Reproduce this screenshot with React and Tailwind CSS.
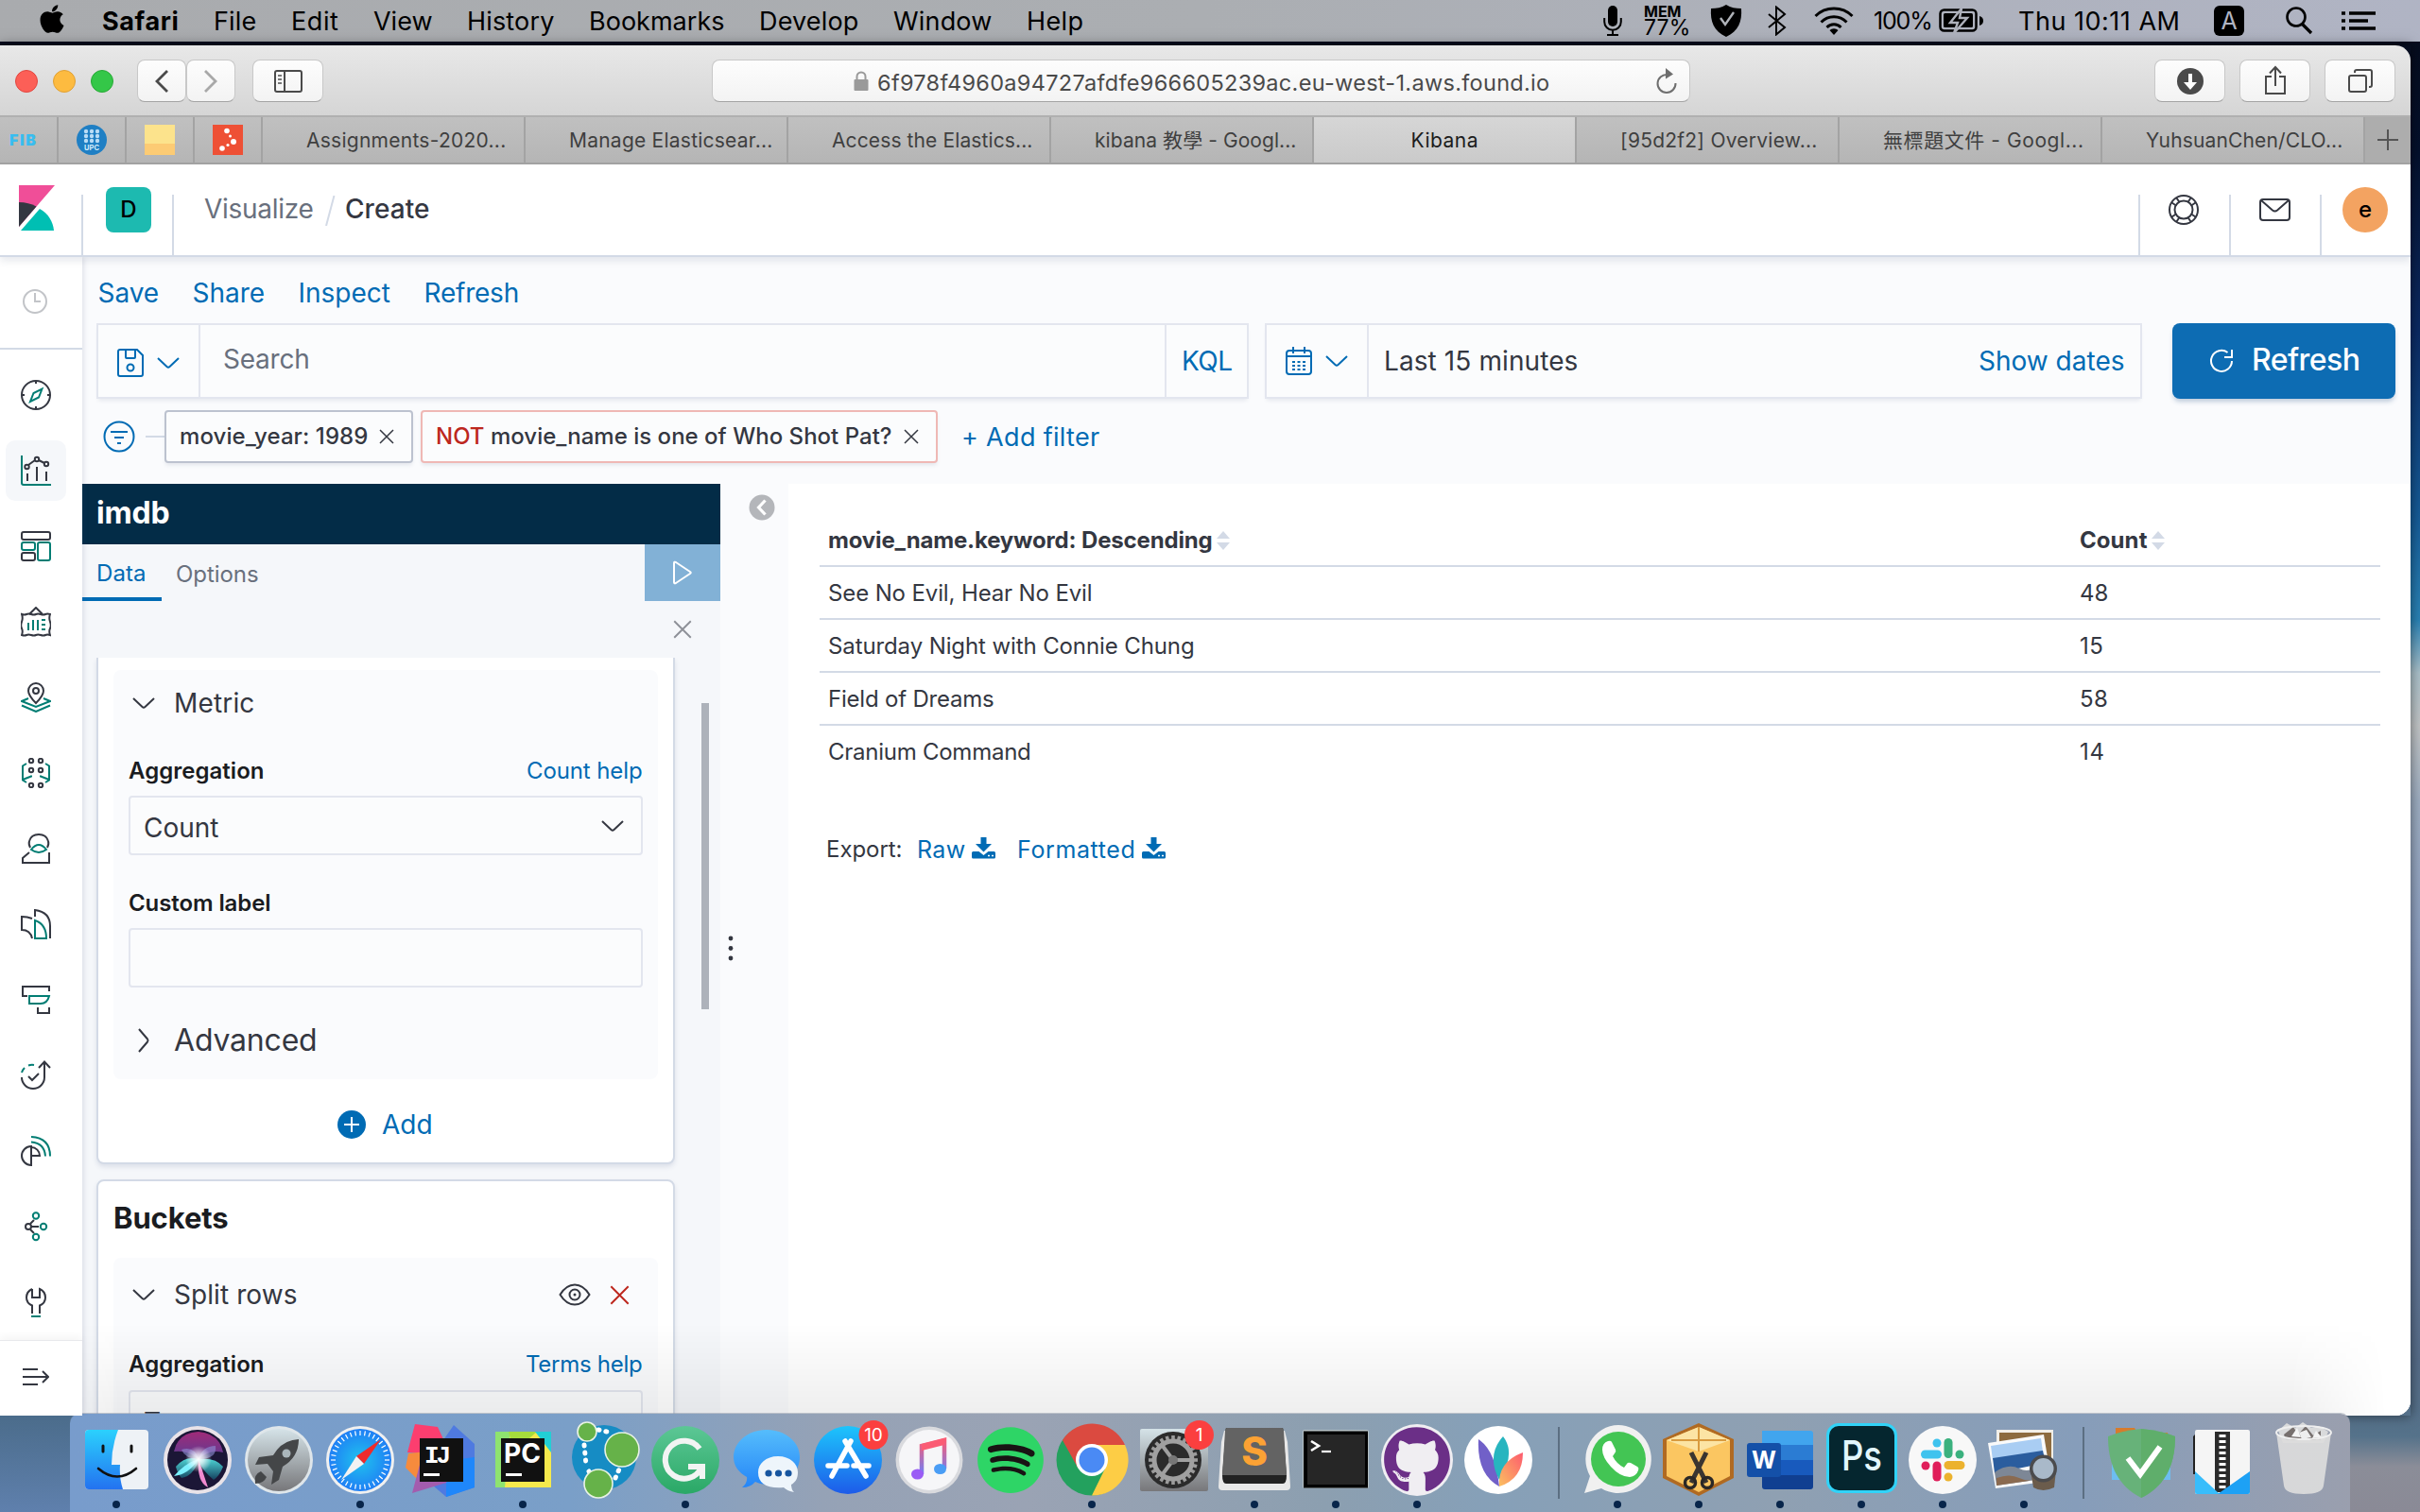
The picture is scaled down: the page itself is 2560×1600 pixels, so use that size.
import React, { useLayoutEffect, useRef } from "react";
import { FaApple, FaGithub, FaPhoneAlt, FaSpotify } from "react-icons/fa";

/* A run of text spaced out to fill a given width. */
function T({ w, className = "", children }) {
  const ref = useRef(null);
  useLayoutEffect(() => {
    const el = ref.current;
    el.style.letterSpacing = "0px";
    const natural = el.getBoundingClientRect().width;
    const count = el.textContent.length;
    el.style.letterSpacing = `${(w + 1.5 - natural) / count}px`;
  }, [w]);
  return (
    <span className={`block shrink-0 pl-px leading-none whitespace-nowrap ${className}`} style={{ width: w + 3 }}>
      <span ref={ref} className="inline-block whitespace-nowrap">{children}</span>
    </span>
  );
}

const Svg = ({ w, h, className = "", children }) => (
  <svg width={w} height={h} viewBox={`0 0 ${w} ${h}`} fill="none" className={`block shrink-0 ${className}`}>{children}</svg>
);

/* ---------- macOS menu bar ---------- */

function MenuBar() {
  const items = [["File", 44], ["Edit", 49], ["View", 61], ["History", 91], ["Bookmarks", 142], ["Develop", 104], ["Window", 103], ["Help", 59]];
  return (
    <div className="flex h-11 items-center bg-linear-to-r from-[#a9abae] via-[#abaeb2] to-[#b0b4c4] text-[27px] text-black">
      <FaApple className="mb-1 ml-[39px] h-[34px] w-[32px] shrink-0" />
      <div className="ml-[36px] flex gap-[35px]">
        <T w={80} className="font-bold">Safari</T>
        {items.map(([t, w]) => <T key={t} w={w}>{t}</T>)}
      </div>
      <Svg w={20} h={32} className="ml-[549px]">
        <rect x="5" y="0" width="10" height="22" rx="5" fill="#000" />
        <path d="M1.200 13v4a8.800 8.800 0 0 0 17.600 0v-4M10 26v5M4 31h12" stroke="#000" strokeWidth="2" />
      </Svg>
      <div className="ml-[22px] flex h-11 w-[54px] flex-col pt-[4px]">
        <T w={38} className="text-[16px] font-bold">MEM</T>
        <T w={48} className="-mt-[2px] text-[23px]">77%</T>
      </div>
      <Svg w={34} h={34} className="ml-[17px]">
        <path d="M17 0c5 3 10 4 16 4 1 14-3 24-16 30C4 28 0 18 1 4 7 4 12 3 17 0z" fill="#000" />
        <path d="M11 14l5 7 9-13" stroke="#b0b3b9" strokeWidth="2.400" />
      </Svg>
      <Svg w={22} h={32} className="ml-[26px]">
        <path d="M2 9l17 14-9 7.500V1.500L19 9 2 23" stroke="#000" strokeWidth="2" />
      </Svg>
      <Svg w={42} h={30} className="ml-[28px]">
        <path d="M1.500 10a28 28 0 0 1 39 0M7.500 16.500a19 19 0 0 1 27 0M13.500 22a10.500 10.500 0 0 1 15 0" stroke="#000" strokeWidth="3" />
        <path d="M16.500 25a6.500 6.500 0 0 1 9 0l-4.500 5z" fill="#000" />
      </Svg>
      <T w={60} className="ml-[20px] text-[25px]">100%</T>
      <Svg w={48} h={26} className="ml-[7px]">
        <rect x="1.500" y="1.500" width="38" height="22" rx="4" stroke="#000" strokeWidth="2.500" />
        <rect x="5" y="5" width="31" height="15" rx="1.500" fill="#000" />
        <path d="M24 0L12 15h8l-4 11L30 10h-8z" fill="#000" stroke="#aeb1bb" strokeWidth="2.400" />
        <path d="M43 8q4 1 4 5t-4 5z" fill="#000" />
      </Svg>
      <T w={170} className="ml-[35px]">Thu 10:11 AM</T>
      <span className="ml-[35px] flex h-8 w-8 items-center justify-center rounded-md bg-black text-[25px] leading-none text-[#b0b4c2]">A</span>
      <Svg w={30} h={30} className="ml-[43px]">
        <circle cx="12" cy="11" r="9.500" stroke="#000" strokeWidth="2.600" />
        <path d="M18.500 18.500l9.500 9.500" stroke="#000" strokeWidth="3.200" />
      </Svg>
      <Svg w={36} h={20} className="ml-[30px]">
        <path d="M0 2h4M8 2h28M0 10h4M8 10h20M0 18h4M8 18h28" stroke="#000" strokeWidth="3.600" />
      </Svg>
    </div>
  );
}

/* ---------- Safari chrome ---------- */

const chip = "flex h-[45px] shrink-0 items-center justify-center rounded-[8px] border border-[#c8c8c8] border-b-[#a4a4a4] bg-linear-to-b from-[#fdfdfd] to-[#f3f3f3]";

function Toolbar() {
  return (
    <div className="flex h-[76px] items-start rounded-tr-[16px] border-b-2 border-[#b0b0b0] bg-linear-to-b from-[#e8e8e8] to-[#d5d5d5] pt-[15px]">
      <div className="ml-4 flex h-[45px] items-center gap-4">
        <span className="h-6 w-6 rounded-full border border-[#e2463f] bg-[#fc5f57]" />
        <span className="h-6 w-6 rounded-full border border-[#e0a033] bg-[#fdbb40]" />
        <span className="h-6 w-6 rounded-full border border-[#27a935] bg-[#34c748]" />
      </div>
      <div className={`${chip} ml-[25px] w-[52px]`}>
        <Svg w={18} h={26}><path d="M15 2L4 13l11 11" stroke="#4a4a4a" strokeWidth="2.800" /></Svg>
      </div>
      <div className={`${chip} w-[52px]`}>
        <Svg w={18} h={26}><path d="M3 2l11 11L3 24" stroke="#a8a8a8" strokeWidth="2.800" /></Svg>
      </div>
      <div className={`${chip} ml-[18px] w-[75px]`}>
        <Svg w={30} h={24}>
          <rect x="1" y="1" width="28" height="22" rx="2" stroke="#4a4a4a" strokeWidth="2" />
          <path d="M11 1v22" stroke="#4a4a4a" strokeWidth="2" />
          <path d="M4 6h4M4 10h4M4 14h4" stroke="#777" strokeWidth="2" />
        </Svg>
      </div>
      <div className={`${chip} ml-[411px] w-[1035px] justify-start`}>
        <Svg w={16} h={22} className="ml-[149px]">
          <rect x="0.500" y="9" width="15" height="12" rx="1" fill="#9a9a9a" />
          <path d="M3.500 10V6a4.500 4.500 0 0 1 9 0v4" stroke="#9a9a9a" strokeWidth="2" />
        </Svg>
        <T w={710} className="mt-1 ml-[8px] text-[23.500px] text-[#4a4a4a]">6f978f4960a94727afdfe966605239ac.eu-west-1.aws.found.io</T>
        <Svg w={24} h={28} className="ml-[111px]">
          <path d="M13 7a9.500 9.500 0 1 0 8.500 9" stroke="#6e6e6e" strokeWidth="2" />
          <path d="M11 0l8 6.500-8 5z" fill="#6e6e6e" />
        </Svg>
      </div>
      <div className={`${chip} ml-[491px] w-[75px]`}>
        <Svg w={28} h={28}>
          <circle cx="14" cy="14" r="14" fill="#4a4a4a" />
          <path d="M12 6h4v9h5l-7 8-7-8h5z" fill="#fff" />
        </Svg>
      </div>
      <div className={`${chip} ml-[15px] w-[75px]`}>
        <Svg w={24} h={32} className="mb-0.5">
          <path d="M8 12H2v18h20V12h-6M12 22V3M6 8.500L12 2l6 6.500" stroke="#4a4a4a" strokeWidth="2" />
        </Svg>
      </div>
      <div className={`${chip} ml-[15px] w-[75px]`}>
        <Svg w={26} h={26}>
          <rect x="1" y="7" width="18" height="17" rx="2" stroke="#4a4a4a" strokeWidth="2" />
          <path d="M7 4V3a2 2 0 0 1 2-2h14a2 2 0 0 1 2 2v14a2 2 0 0 1-2 2h-1" stroke="#4a4a4a" strokeWidth="2" />
        </Svg>
      </div>
    </div>
  );
}

function TabBar() {
  const tabs = [["Assignments-2020...", 210], ["Manage Elasticsear...", 214], ["Access the Elastics...", 211], ["kibana 教學 - Googl...", 212], ["Kibana", 70], ["[95d2f2] Overview...", 207], ["無標題文件 - Googl...", 211], ["YuhsuanChen/CLO...", 207]];
  const pin = "flex shrink-0 items-center justify-center border-r-2 border-[#a3a3a3]";
  return (
    <div className="flex h-[50px] border-b-2 border-[#a2a2a2] bg-linear-to-b from-[#c0c0c0] to-[#b5b5b5] text-[21px]">
      <div className={`${pin} w-[62px] justify-start pl-[9px]`}><T w={28} className="text-[16px] font-black text-[#38bdf0]">FIB</T></div>
      <div className={`${pin} w-[72px]`}>
        <Svg w={32} h={32}>
          <circle cx="16" cy="16" r="16" fill="#1f7fc4" />
          {[7, 12, 17].map((y) => [10, 16, 22].map((x) => <circle key={`${x}-${y}`} cx={x} cy={y} r="2.200" fill="#b9dcf5" />))}
          <text x="16" y="27" fontSize="7.500" fontWeight="700" textAnchor="middle" fill="#d6ecfa">UPC</text>
        </Svg>
      </div>
      <div className={`${pin} w-[72px]`}>
        <Svg w={32} h={32}><rect width="32" height="32" fill="#fce38c" /><rect y="20" width="32" height="12" fill="#fccb74" /></Svg>
      </div>
      <div className={`${pin} w-[72px]`}>
        <Svg w={32} h={32}>
          <rect width="32" height="32" fill="#ee5035" />
          <g fill="#fff"><circle cx="15" cy="6.500" r="2.800" /><circle cx="18.500" cy="12" r="1.500" /><circle cx="22" cy="18" r="3" /><circle cx="16" cy="21.500" r="1.600" /><circle cx="10" cy="25" r="2.800" /></g>
        </Svg>
      </div>
      {tabs.map(([t, w]) => {
        const active = t === "Kibana";
        return (
          <div key={t} className={active
            ? "flex w-[278px] shrink-0 items-center justify-center border-r-2 border-[#a3a3a3] bg-linear-to-b from-[#d6d6d6] to-[#cacaca] text-[#1c1c1c]"
            : "flex w-[278px] shrink-0 items-center border-r-2 border-[#a3a3a3] pl-[45px] text-[#3f3f3f]"}>
            <T w={w}>{t}</T>
          </div>
        );
      })}
      <div className="flex flex-1 items-center justify-center bg-[#adadad]">
        <Svg w={22} h={22}><path d="M11 0v22M0 11h22" stroke="#555" strokeWidth="2" /></Svg>
      </div>
    </div>
  );
}

/* ---------- Kibana icons ---------- */

const D = "#343741";
const G = "#017d73";

const navIcons = [
  ["discover", <>
    <circle cx="16" cy="16" r="15" stroke={D} /><path d="M16 1v3M16 28v3M1 16h3M28 16h3" stroke={D} />
    <path d="M22.500 9.500l-3.500 9-9 4.500 3.500-9z" stroke={G} /></>],
  ["visualize", <>
    <path d="M1 0v29a2 2 0 0 0 2 2h29" stroke={G} /><path d="M7 19v8M17 12v15M27 17v10M8 10l7-5M19 5l6 3" stroke={D} />
    <circle cx="6.500" cy="12" r="2.200" stroke={D} /><circle cx="17" cy="4" r="2.200" stroke={D} /><circle cx="27" cy="9" r="2.200" stroke={D} /></>],
  ["dashboard", <>
    <rect x="1" y="1" width="30" height="8" rx="2" stroke={D} /><rect x="1" y="12" width="14" height="8" rx="2" stroke={G} />
    <rect x="18" y="12" width="13" height="19" rx="2" stroke={G} /><rect x="1" y="23" width="14" height="8" rx="2" stroke={D} /></>],
  ["canvas", <>
    <path d="M9 8l7-7 7 7" stroke={D} /><path d="M1 8q3 1 5 0t5 0 5 0 5 0 5 0 5 0q-1.500 4 0 8t0 7 0 7q-3-1-5 0t-5 0-5 0-5 0-5 0-5 0q1.500-4 0-7t0-7 0-8z" stroke={D} />
    <path d="M8 17v8M13 14v11M18 14v11M22 14h4M22 19h4M22 24h4" stroke={G} /></>],
  ["maps", <>
    <path d="M16 22C11 17 8 13 8 9a8 8 0 0 1 16 0c0 4-3 8-8 13z" stroke={D} /><circle cx="16" cy="9" r="3" stroke={D} />
    <path d="M8 17l-7 3 15 6 15-6-7-3M1 24.500l15 6.500 15-6.500" stroke={G} /></>],
  ["ml", <>
    {[3, 13, 29].map((y) => [11, 21].map((x) => <circle key={`${x}-${y}`} cx={x} cy={y} r="2.200" stroke={D} />))}
    <path d="M6 6L2 8.500v15L6 26M2 23l9-3.500v-1M26 6l4 2.500v15L26 26M30 23l-9-3.500v-1" stroke={G} /></>],
  ["infra", <>
    <path d="M10 15q-2-4-1-7 2-7 10-7t10 7q1 3-1 7M9 20l-7 6v5h28V20" stroke={D} /><path d="M11 17q8-10 16 0-8 6-16 0z" stroke={G} /></>],
  ["logs", <>
    <path d="M12 10Q7 8 1 8v14q9 0 11 9M15 8V1q16 2 16 17v13" stroke={D} /><path d="M15 12q12 4 12 19H15z" stroke={G} /></>],
  ["apm", <>
    <path d="M7 12H2V2h28v5M18 24v6h12v-6" stroke={D} /><path d="M9 12h21q-2 8-9 8H9z" stroke={G} /></>],
  ["uptime", <>
    <path d="M1 18a12 12 0 0 0 24 0V2M19 8l6-6.500L31 8M8 17l4 4 7-7" stroke={D} /><path d="M1 13a12 12 0 0 1 3-5M8 5.500a12 12 0 0 1 6-.5" stroke={G} /></>],
  ["siem", <>
    <path d="M11 11a10 10 0 1 0 0 20zM11 12a9 9 0 0 1 9 9h-9" stroke={D} /><path d="M11 6.500q14 1 15 15M11 1q20 1 20 20.500" stroke={G} /></>],
  ["graph", <>
    <circle cx="8" cy="16" r="3" stroke={D} /><path d="M11 16h8M10 13l4-4M10 19l4 4" stroke={D} />
    <circle cx="16" cy="4.500" r="3.200" stroke={G} /><circle cx="24" cy="16" r="3.200" stroke={G} /><circle cx="16" cy="27" r="3.200" stroke={G} /></>],
  ["tools", <>
    <path d="M12 2a10 10 0 0 0-6 9c0 4 2.500 7 6 8.500V28M20 28v-8.500c3.500-1.500 6-4.500 6-8.500a10 10 0 0 0-6-9v9h-8V2" stroke={D} /><path d="M11 31h10" stroke={G} /></>],
];

function Sidebar() {
  return (
    <div className="z-10 flex w-[87px] shrink-0 flex-col bg-white shadow-[2px_0_5px_rgba(60,70,110,0.13)]">
      <div className="flex h-[98px] items-center border-b-2 border-[#d3dae6] pb-0.5 pl-6">
        <Svg w={26} h={26}><circle cx="13" cy="13" r="12" stroke="#c2c4c8" strokeWidth="2" /><path d="M13 4v9h6" stroke="#c2c4c8" strokeWidth="2" /></Svg>
      </div>
      <div className="pt-2">
        {navIcons.map(([name, art]) => (
          <div key={name} className="flex h-20 items-center pl-1.5">
            <div className={name === "visualize" ? "flex h-16 w-16 items-center justify-center rounded-[10px] bg-[#f5f7fa]" : "flex h-16 w-16 items-center justify-center"}>
              <Svg w={32} h={32}><g strokeWidth="2">{art}</g></Svg>
            </div>
          </div>
        ))}
      </div>
      <div className="flex flex-1 items-center border-t border-[#e8e9ec] pb-1 pl-6 shadow-[0_-4px_8px_rgba(0,0,0,0.04)]">
        <Svg w={28} h={20}><path d="M0 2h16M0 10h27M0 18h16M21 4l6 6-6 6" stroke={D} strokeWidth="2" /></Svg>
      </div>
    </div>
  );
}

function Header() {
  const cell = "mt-8 flex h-16 shrink-0 border-l-2 border-[#d3dae6]";
  return (
    <div className="z-20 flex h-[98px] shrink-0 border-b-2 border-[#d3dae6] bg-white shadow-[0_4px_8px_rgba(60,70,110,0.12)]">
      <div className="w-[86px] pt-[22px] pl-5">
        <Svg w={38} h={48}>
          <path d="M0 0h38L0 44z" fill="#f04e98" />
          <path d="M0 18c7 0 13 1.500 18.500 4.500L0 44z" fill="#343741" />
          <path d="M22 25C31 30 36 38 37 48H2z" fill="#00bfb3" />
        </Svg>
      </div>
      <div className={`${cell} w-[96px]`}>
        <span className="-mt-2 ml-6 flex h-12 w-12 items-center justify-center rounded-[8px] bg-[#1dbab0] text-[24px] font-medium text-black">D</span>
      </div>
      <div className={`${cell} flex-1 text-[28px]`}>
        <div className="-mt-[13px] flex h-[56px] items-center pl-[31px]">
          <T w={114} className="text-[#69707d]">Visualize</T>
          <Svg w={12} h={32} className="mt-1 ml-[11px]"><path d="M10.500 0L2 32" stroke="#d3dae6" strokeWidth="2" /></Svg>
          <T w={88} className="ml-[9px] font-medium text-[#343741]">Create</T>
        </div>
      </div>
      <div className={`${cell} w-[96px] pl-[29px]`}>
        <Svg w={34} h={34}>
          <circle cx="17" cy="16" r="15" stroke={D} strokeWidth="2" /><circle cx="17" cy="16" r="9.500" stroke={D} strokeWidth="2" />
          <path d="M9.500 3.500l3 4.500M24.500 3.500l-3 4.500M9.500 28.500l3-4.500M24.500 28.500l-3-4.500M4.500 8.500l4.500 3M29.500 8.500l-4.500 3M4.500 23.500l4.500-3M29.500 23.500l-4.500-3" stroke={D} strokeWidth="2" />
        </Svg>
      </div>
      <div className={`${cell} w-[96px] pt-1 pl-[30px]`}>
        <Svg w={34} h={26}><rect x="1" y="1" width="31" height="22" rx="3" stroke={D} strokeWidth="2" /><path d="M2 2l12 10.500q2.500 2 5 0L31 2" stroke={D} strokeWidth="2" /></Svg>
      </div>
      <div className={`${cell} w-[96px]`}>
        <span className="-mt-2 ml-[22px] flex h-12 w-12 items-center justify-center rounded-full bg-[#f3a361] text-[24px] font-medium text-black">e</span>
      </div>
    </div>
  );
}

const Chevron = ({ color = D, className = "" }) => (
  <Svg w={24} h={14} className={className}><path d="M1 2l9.500 9q1.500 1.200 3 0L23 2" stroke={color} strokeWidth="2" /></Svg>
);
const Cross = ({ s = 16, color = D, className = "" }) => (
  <svg width={s} height={s} viewBox="0 0 16 16" className={`block shrink-0 ${className}`}><path d="M1 1l14 14M15 1L1 15" stroke={color} strokeWidth="1.500" /></svg>
);

const BLUE = "#006bb4";

function QueryBar() {
  const box = "flex shrink-0 border-2 border-[#e3e6ef] bg-[#fbfcfd] shadow-[0_4px_4px_-2px_rgba(60,70,110,0.1)]";
  return (
    <div className="flex h-20 pl-[15px] text-[28px]">
      <div className={`${box} w-[1219px]`}>
        <div className="flex w-[108px] items-center border-r-2 border-[#e3e6ef] pl-5">
          <Svg w={28} h={30} className="mt-1">
            <path d="M3 1h18l6 6v20a2 2 0 0 1-2 2H3a2 2 0 0 1-2-2V3a2 2 0 0 1 2-2zM9 1v8a1 1 0 0 0 1 1h8a1 1 0 0 0 1-1V1" stroke={BLUE} strokeWidth="2" />
            <circle cx="14" cy="20" r="3.500" stroke={BLUE} strokeWidth="2" />
          </Svg>
          <Chevron color={BLUE} className="mt-1 ml-[14px]" />
        </div>
        <div className="flex flex-1 items-center pb-1 pl-[23px]"><T w={90} className="text-[#69707d]">Search</T></div>
        <div className="flex w-[87px] items-center border-l-2 border-[#e3e6ef] pl-[15px]"><T w={52} className="text-[#006bb4]">KQL</T></div>
      </div>
      <div className={`${box} ml-[17px] w-[928px]`}>
        <div className="flex w-[108px] items-center border-r-2 border-[#e3e6ef] pl-5">
          <Svg w={28} h={32}>
            <rect x="1" y="5" width="26" height="25" rx="3" stroke={BLUE} strokeWidth="2" />
            <path d="M1 11h26M8 1v7M20 1v7" stroke={BLUE} strokeWidth="2" />
            <path d="M7 17h3M12.500 17h3M18 17h3M7 21h3M12.500 21h3M18 21h3M7 25h3M12.500 25h3M18 25h3" stroke={BLUE} strokeWidth="2.200" />
          </Svg>
          <Chevron color={BLUE} className="ml-[14px]" />
        </div>
        <div className="flex flex-1 items-center pl-[15px]"><T w={204} className="text-[#343741]">Last 15 minutes</T></div>
        <T w={153} className="mr-[16px] self-center text-[#006bb4]">Show dates</T>
      </div>
      <div className="ml-8 flex w-[236px] shrink-0 items-center rounded-[8px] bg-[#0d6cb3] text-[32px] text-white shadow-[0_4px_5px_-1px_rgba(50,90,140,0.3)]">
        <Svg w={28} h={28} className="ml-[38px]"><path d="M25 14a11 11 0 1 1-4.500-9M25 2v8h-8" stroke="#fff" strokeWidth="2" /></Svg>
        <T w={113} className="mb-0.5 ml-[17px] font-medium">Refresh</T>
      </div>
    </div>
  );
}

function FilterBar() {
  return (
    <div className="mt-3 flex h-14 items-center pl-[22px] text-[24px] font-medium text-[#343741]">
      <Svg w={34} h={34}><circle cx="17" cy="17" r="15.500" stroke={BLUE} strokeWidth="2" /><path d="M8 12h18M12 18h10M15 24h4" stroke={BLUE} strokeWidth="2.200" /></Svg>
      <span className="ml-[11px] h-[2px] w-5 bg-[#d3dae6]" />
      <div className="flex h-14 w-[263px] shrink-0 items-center rounded-[4px] border-2 border-[#bcc2cf] bg-[#fbfcfd] pl-[13px] shadow-[0_3px_4px_-1px_rgba(60,70,110,0.12)]">
        <T w={198}>movie_year: 1989</T><Cross className="ml-[11px]" />
      </div>
      <div className="ml-2 flex h-14 w-[547px] shrink-0 items-center rounded-[4px] border-2 border-[#efb8b5] bg-[#fbfcfd] pl-[13px] shadow-[0_3px_4px_-1px_rgba(60,70,110,0.12)]">
        <T w={481}><span className="text-[#bd271e]">NOT</span> movie_name is one of Who Shot Pat?</T><Cross className="ml-[12px]" />
      </div>
      <T w={145} className="ml-[24px] text-[27px] font-normal text-[#006bb4]">+ Add filter</T>
    </div>
  );
}

function Field({ label, lw, help, hw }) {
  return (
    <div className="flex items-center justify-between pr-[16px] pl-[15px] text-[24px]">
      <T w={lw} className="font-semibold text-[#1a1c21]">{label}</T>
      {help && <T w={hw} className="text-[#006bb4]">{help}</T>}
    </div>
  );
}

function ConfigPanel() {
  const card = "w-[612px] border-2 border-[#d3dae6] bg-white shadow-[0_3px_5px_rgba(60,80,120,0.13)]";
  return (
    <div className="flex w-[675px] shrink-0 flex-col bg-[#f5f7fa] text-[28px] text-[#343741]">
      <div className="flex h-16 shrink-0 items-center bg-[#032c47] pb-0.5 pl-[14px] text-[32px] text-white"><T w={76} className="font-bold">imdb</T></div>
      <div className="flex h-[60px] shrink-0 text-[24px]">
        <div className="flex w-[84px] items-center border-b-4 border-[#006bb4] pt-1.5 pl-[14px]"><T w={51} className="text-[#006bb4]">Data</T></div>
        <div className="flex flex-1 items-center pt-[3px] pl-[14px]"><T w={86} className="text-[#69707d]">Options</T></div>
        <div className="flex w-20 items-center justify-center bg-[#82b1d6]">
          <Svg w={22} h={26}><path d="M2 3v20q0 2 2 1l15-10q1.500-1 0-2L4 2Q2 1 2 3z" stroke="#fff" strokeWidth="2" /></Svg>
        </div>
      </div>
      <div className="flex h-[60px] shrink-0 items-center justify-end pr-[30px]"><Cross s={20} color="#8d9097" /></div>
      <div className="flex flex-1 overflow-hidden">
        <div className="ml-[15px] w-[612px]">
          <div className={`${card} h-[536px] rounded-b-[8px] border-t-0 pt-[13px]`}>
            <div className="mx-4 h-[433px] rounded-[8px] bg-[#fafbfd]">
              <div className="flex h-[70px] items-center pl-[20px]"><Chevron /><T w={84} className="ml-[19px]">Metric</T></div>
              <div className="h-[63px] pt-[25px]"><Field label="Aggregation" lw={142} help="Count help" hw={121} /></div>
              <div className="mx-4 flex h-[63px] items-center justify-between rounded-[4px] border-2 border-[#e3e6ef] bg-[#fbfcfd] pr-[18px] pl-[13px]">
                <T w={78} className="mt-1">Count</T><Chevron />
              </div>
              <div className="h-[77px] pt-[39px]"><Field label="Custom label" lw={149} /></div>
              <div className="mx-4 h-[63px] rounded-[4px] border-2 border-[#e3e6ef] bg-[#fbfcfd]" />
              <div className="mt-[40px] flex items-center pl-[25px] text-[32px]">
                <Svg w={14} h={26}><path d="M2 1l9 10.500q1.200 1.500 0 3L2 25" stroke={D} strokeWidth="2" /></Svg>
                <T w={150} className="ml-[24px]">Advanced</T>
              </div>
            </div>
            <div className="mt-[33px] flex items-center pl-[253px]">
              <Svg w={30} h={30}><circle cx="15" cy="15" r="15" fill={BLUE} /><path d="M15 7v16M7 15h16" stroke="#fff" strokeWidth="2" /></Svg>
              <T w={52} className="ml-[16px] text-[#006bb4]">Add</T>
            </div>
          </div>
          <div className={`${card} mt-[16px] h-[500px] rounded-[8px] pt-[23px]`}>
            <T w={120} className="ml-[15px] text-[31px] font-bold text-[#1a1c21]">Buckets</T>
            <div className="mx-4 mt-[27px] h-[440px] rounded-[8px] bg-[#fafbfd]">
              <div className="flex h-[78px] items-center pl-[20px]">
                <Chevron /><T w={129} className="ml-[19px]">Split rows</T>
                <Svg w={34} h={26} className="ml-[276px]">
                  <path d="M1.500 13Q8 2.500 17 2.500T32.500 13Q26 23.500 17 23.500T1.500 13z" stroke={D} strokeWidth="2" />
                  <circle cx="17" cy="13" r="5.500" stroke={D} strokeWidth="2" /><circle cx="17" cy="13" r="1.500" fill={D} />
                </Svg>
                <Cross s={21} color="#bd271e" className="ml-[20px]" />
              </div>
              <div className="h-[62px] pt-[23px]"><Field label="Aggregation" lw={142} help="Terms help" hw={122} /></div>
              <div className="mx-4 h-[63px] rounded-[4px] border-2 border-[#e3e6ef] bg-[#fbfcfd] pt-[18px] pl-[13px]"><T w={76}>Terms</T></div>
            </div>
          </div>
        </div>
        <div className="mt-[48px] ml-[28px] h-[324px] w-2 bg-[#adb2ba]" />
      </div>
    </div>
  );
}

const Sort = () => (
  <Svg w={14} h={20} className="ml-[4px]"><path d="M0 8l7-8 7 8zM0 12h14l-7 8z" fill="#d3dae6" /></Svg>
);
const Download = () => (
  <Svg w={25} h={24} className="mb-[2px]">
    <path d="M9.500 0h6v7H21L12.500 15.500 4 7h5.500z" fill={BLUE} />
    <path d="M1.500 15H7.500l5 4 5-4h6a1.500 1.500 0 0 1 1.500 1.500v4.500a1.500 1.500 0 0 1-1.500 1.500h-22A1.500 1.500 0 0 1 0 21v-4.500A1.500 1.500 0 0 1 1.500 15z" fill={BLUE} />
    <path d="M17 19.500h2M21 19.500h2" stroke="#fff" strokeWidth="1.600" />
  </Svg>
);

function Results() {
  const rows = [["See No Evil, Hear No Evil", 278, "48", 29], ["Saturday Night with Connie Chung", 386, "15", 24], ["Field of Dreams", 174, "58", 29], ["Cranium Command", 213, "14", 25]];
  return (
    <div className="flex-1 bg-white pt-8 pr-8 pl-[33px] text-[24px] text-[#343741]">
      <div className="flex h-14 items-center border-b-2 border-[#d3dae6] pt-0.5 pl-[8px] font-bold">
        <div className="flex w-[1324px] items-center"><T w={405}>movie_name.keyword: Descending</T><Sort /></div>
        <T w={70}>Count</T><Sort />
      </div>
      {rows.map(([name, w, n, nw], i) => (
        <div key={name} className={i < 3 ? "flex h-14 items-center border-b-2 border-[#d3dae6] pt-0.5 pl-[8px]" : "flex h-14 items-center pl-[8px]"}>
          <div className="w-[1324px]"><T w={w}>{name}</T></div><T w={nw}>{n}</T>
        </div>
      ))}
      <div className="mt-[62px] flex items-center pl-[6px]">
        <T w={79}>Export:</T>
        <div className="ml-[14px] flex items-center gap-[6px] text-[25px] text-[#006bb4]"><T w={50}>Raw</T><Download /></div>
        <div className="ml-[22px] flex items-center gap-[6px] text-[25px] text-[#006bb4]"><T w={124}>Formatted</T><Download /></div>
      </div>
    </div>
  );
}

function Kibana() {
  return (
    <div className="flex flex-1 flex-col overflow-hidden rounded-br-[16px] bg-white">
      <Header />
      <div className="flex flex-1 overflow-hidden">
        <Sidebar />
        <div className="flex flex-1 flex-col bg-[#fafbfd]">
          <div className="flex h-[70px] items-center gap-[34px] pt-[6px] pl-[15.500px] text-[28px] text-[#006bb4]">
            <T w={63}>Save</T><T w={75}>Share</T><T w={96}>Inspect</T><T w={99}>Refresh</T>
          </div>
          <QueryBar />
          <FilterBar />
          <div className="mt-[22px] flex flex-1 overflow-hidden">
            <ConfigPanel />
            <div className="flex w-[72px] shrink-0 flex-col">
              <Svg w={28} h={28} className="mt-[11px] ml-[30px]"><circle cx="14" cy="14" r="13.500" fill="#b4b6ba" /><path d="M17.500 6.500L10.500 14l7 7.500" stroke="#fff" strokeWidth="3.200" /></Svg>
              <Svg w={6} h={28} className="mt-[439px] ml-2"><g fill={D}><circle cx="3" cy="3" r="2.400" /><circle cx="3" cy="13.500" r="2.400" /><circle cx="3" cy="24" r="2.400" /></g></Svg>
            </div>
            <Results />
          </div>
        </div>
      </div>
    </div>
  );
}

/* ---------- Dock ---------- */

const Badge = ({ x, children }) => (
  <>
    <circle cx={x} cy="22.500" r="15.500" fill="#fb3f3f" />
    <text x={x} y="29" fontSize="19" textAnchor="middle" fill="#fff">{children}</text>
  </>
);

const gear = Array.from({ length: 24 }, (_, i) => i * 15);
const ticks = Array.from({ length: 36 }, (_, i) => i * 10);

const apps = [
  ["finder", true, <>
    <rect x="10" y="17" width="67" height="63" rx="4" fill="#eef2f6" />
    <path d="M14 17h31q-7 18-7 37h9q-1 14 3 26H14a4 4 0 0 1-4-4V21a4 4 0 0 1 4-4z" fill="url(#finder)" />
    <path d="M29 34v6M59 34v6" stroke="#111" strokeWidth="3" strokeLinecap="round" />
    <path d="M24 58q20 17 40 0" stroke="#111" strokeWidth="2.600" strokeLinecap="round" /></>],
  ["siri", false, <>
    <circle cx="43" cy="49" r="36" fill="#e9e3e8" /><circle cx="43" cy="49" r="32" fill="#1b1636" />
    <path d="M18 40q4-20 26-21 22 2 26 22-14-4-26 7-12-10-26-8z" fill="url(#siriTop)" />
    <path d="M20 56q10-12 24-8 18-2 26 8-4 10-10 14-12-10-16-20-6 16-18 18-4-4-6-12z" fill="url(#siriLow)" />
    <path d="M44 48l10 30q-12-6-10-30z" fill="#f08ad0" /><path d="M44 48Q30 52 18 66q16-2 26-18z" fill="#7cf0ff" />
    <path d="M26 38q14-4 18 10-14 0-18-10zM62 34q2 14-18 14 4-14 18-14z" fill="#8f8fd6" opacity="0.600" />
    <circle cx="44" cy="48" r="14" fill="url(#glow)" /></>],
  ["launchpad", false, <>
    <circle cx="43" cy="49" r="36" fill="#dfe6ea" /><circle cx="43" cy="49" r="33" fill="url(#silver)" />
    <path d="M64 27q-18 1-27 17l-15 2-4 8 13-1 6 8-2 14 8-5 4-14q17-10 17-29z" fill="#444648" />
    <circle cx="51" cy="42" r="4.500" fill="#aab6bb" /><path d="M24 61q-8 3-6 13 9 0 12-7z" fill="#444648" /></>],
  ["safari", true, <>
    <circle cx="43" cy="49" r="36" fill="#f0f0f0" /><circle cx="43" cy="49" r="33" fill="url(#safari)" />
    {ticks.map((a) => <path key={a} d="M43 18v5" stroke="#fff" strokeWidth="1.200" transform={`rotate(${a} 43 49)`} />)}
    <path d="M65 27L39 45l8 8z" fill="#ee2b2b" /><path d="M23 70l16-25 8 8z" fill="#f2f2f2" /></>],
  ["intellij", false, <>
    <path d="M15 11l24 3 14 30-46-3z" fill="#fc3e6f" /><path d="M8 42l20-2 4 30-14 0-13-13z" fill="#f68b3d" />
    <path d="M56 12l22 20v46l-30 10-28-24z" fill="#4f7ae0" /><path d="M48 50l30-4v32l-30 10z" fill="#1f87fb" /><path d="M12 84l8-30 32 14-4 5z" fill="#a35cae" />
    <rect x="20" y="26" width="46" height="46" fill="#111" />
    <text x="25" y="52" fontSize="26" fontWeight="700" fontFamily="Liberation Mono, monospace" textLength="28" fill="#fff">IJ</text><rect x="24" y="63" width="17" height="3" fill="#fff" /></>],
  ["pycharm", true, <>
    <rect x="14" y="19" width="59" height="59" fill="#f5e94c" /><path d="M14 19h16l-6 59H14z" fill="#8ee36f" /><path d="M28 19h30L34 40z" fill="#a5dc3c" /><path d="M56 19h17v22z" fill="#22cfd5" />
    <rect x="20" y="26" width="46" height="46" fill="#111" />
    <text x="23" y="52" fontSize="28" fontWeight="700" textLength="39" lengthAdjust="spacingAndGlyphs" fill="#fff">PC</text><rect x="25" y="63" width="17" height="3" fill="#fff" /></>],
  ["neo4j", false, <>
    <circle cx="43" cy="46" r="34" fill="#168cc4" />
    <path d="M37 17l9 2M22 33l2 21M27 61l5 8M55 68l6-14" stroke="#fff" strokeWidth="5" strokeDasharray="1 7" strokeLinecap="round" />
    <g fill="#66b249" stroke="#e9f3e4" strokeWidth="1.600"><circle cx="25" cy="19" r="10" /><circle cx="62" cy="38" r="18" /><circle cx="37" cy="74" r="15" /></g></>],
  ["grammarly", true, <>
    <circle cx="43" cy="49" r="36" fill="url(#green)" />
    <path d="M58 37a20 20 0 1 0 2 20M46 56h15v13" stroke="#f2f4f3" strokeWidth="6" /></>],
  ["messages", false, <>
    <path d="M43 17c20 0 35 13 35 29S64 75 45 75q-8 0-14-3-5 6-14 6 6-5 5-11Q8 59 8 46c0-16 15-29 35-29z" fill="url(#blue)" />
    <path d="M55 45c13 0 21 8 21 17 0 7-3 11-7 13q0 5 3 8-7-1-11-5-27 2-27-16c0-9 8-17 21-17z" fill="#eef5fb" />
    <g fill="#17559f"><circle cx="45" cy="63" r="3.600" /><circle cx="55.500" cy="63" r="3.600" /><circle cx="66" cy="63" r="3.600" /></g></>],
  ["app-store", false, <>
    <circle cx="43" cy="49" r="36" fill="url(#store)" />
    <path d="M46 29L26 66M40 29l22 37M22 55h20M49 55h16" stroke="#fff" strokeWidth="5.500" strokeLinecap="round" />
    <Badge x="70">10</Badge></>],
  ["music", false, <>
    <circle cx="43" cy="49" r="35.500" fill="#d9dade" /><circle cx="43" cy="49" r="32" fill="#f6f6f8" />
    <path d="M35 64V34l24-6v30" stroke="url(#note)" strokeWidth="4.500" /><path d="M35 32l24-6v7l-24 6z" fill="#fb5c74" />
    <ellipse cx="30.500" cy="64" rx="6.500" ry="5.500" fill="#9a5cf5" /><ellipse cx="54.500" cy="58.500" rx="6.500" ry="5.500" fill="#4a9df5" /></>],
  ["spotify", false, <>
    <circle cx="43" cy="49" r="34" fill="#191414" /><FaSpotify x="7" y="13" size="72" color="#2ed566" /></>],
  ["chrome", true, <>
    <circle cx="43" cy="49" r="37.500" fill="#23a15e" />
    <path d="M43 49L12 28a37.500 37.500 0 0 1 66 5z" fill="#db4a40" /><path d="M43 33h35a37.500 37.500 0 0 1-35 53.500L57 58z" fill="#fdcd45" />
    <path d="M12 28l16 29 8-22z" fill="#db4a40" />
    <circle cx="43" cy="49" r="17" fill="#fff" /><circle cx="43" cy="49" r="13.500" fill="#4a8af4" /></>],
  ["settings", false, <>
    <rect x="8" y="16" width="72" height="66" rx="2" fill="url(#silver)" /><circle cx="43" cy="49" r="30" fill="#2b2b2b" />
    {gear.map((a) => <rect key={a} x="41.200" y="23" width="3.600" height="7" fill="#9b9b9b" transform={`rotate(${a} 43 49)`} />)}
    <circle cx="43" cy="49" r="20" stroke="#a0a0a0" strokeWidth="5" /><path d="M43 49L31 33M43 49L31 65M43 49h20" stroke="#a0a0a0" strokeWidth="4" /><circle cx="43" cy="49" r="5" fill="#777" />
    <Badge x="70.500">1</Badge></>],
  ["sublime", true, <>
    <path d="M8 30l3-12h64l3 12 3 47a4 4 0 0 1-4 4H9a4 4 0 0 1-4-4z" fill="#e8e8e8" />
    <path d="M13 15h60l4 50q0 9-4 9H13q-4 0-4-9z" fill="#222" /><path d="M14 15h58q2 0 2 3l3 47H9l3-47q0-3 2-3z" fill="#636363" />
    <text x="43" y="55" fontSize="42" fontWeight="800" textAnchor="middle" fill="#fca234">S</text></>],
  ["terminal", true, <>
    <rect x="8" y="17" width="70" height="62" rx="2" fill="#b5c0c4" /><rect x="9" y="18.500" width="68" height="60" fill="#000" /><rect x="13" y="22" width="61" height="53" fill="#262626" />
    <path d="M17 29l8 5-8 5" stroke="#fff" strokeWidth="2.600" /><path d="M28 40h10" stroke="#fff" strokeWidth="2.200" /></>],
  ["github", true, <>
    <circle cx="43" cy="49" r="38" fill="#f0eef2" /><FaGithub x="7" y="13" size="72" color="#6b2f87" /></>],
  ["paint", false, <>
    <circle cx="43" cy="49" r="36" fill="#fff" />
    <path d="M22 27q18 12 22 50Q20 64 22 27z" fill="#7160c8" /><path d="M48 24q14 18-4 46-14-26 4-46z" fill="#27b5bf" /><path d="M69 41q0 28-25 36-2-26 25-36z" fill="url(#petal)" /></>],
];

const moreApps = [
  ["whatsapp", true, <>
    <path d="M44 12a35 36 0 1 1-18 67L8 84l6-18A35 36 0 0 1 44 12z" fill="#f0f0f0" /><circle cx="44" cy="48" r="29" fill="#43c554" />
    <path d="M27 38q0-7 6-9 3-1 4 1l4 8q1 2-1 4l-2 3q4 8 12 12l3-4q1-2 4-1l7 4q2 1 1 4-2 6-9 7-10 0-20-11-9-10-9-18z" fill="#fff" /></>],
  ["archive", true, <>
    <path d="M43 10l37 17v41L43 87 5 68V27z" fill="#b06a22" /><path d="M43 14l33 14v38L43 83 9 66V28z" fill="#fbc661" /><path d="M43 14l33 14-33 12L9 28z" fill="#fce4a4" /><path d="M43 14v26M14 28h58" stroke="#d99b3f" strokeWidth="2" />
    <path d="M35 41l16 32M51 41L35 73" stroke="#3a3530" strokeWidth="5" /><circle cx="34" cy="73" r="5.500" stroke="#2b2826" strokeWidth="3.500" /><circle cx="52" cy="73" r="5.500" stroke="#2b2826" strokeWidth="3.500" /></>],
  ["word", true, <>
    <path d="M24 18h51q3 0 3 3v12H24z" fill="#41a5ee" /><path d="M24 33h54v16H24z" fill="#2b7cd3" /><path d="M24 49h54v16H24z" fill="#185abd" /><path d="M24 65h54v12q0 3-3 3H27q-3 0-3-3z" fill="#103f91" />
    <rect x="8" y="31" width="36" height="36" rx="3" fill="#1450a8" /><text x="26" y="58" fontSize="25" fontWeight="700" textAnchor="middle" fill="#fff">W</text></>],
  ["photoshop", true, <>
    <rect x="6" y="10" width="75" height="74" rx="13" fill="#31d3f8" /><rect x="9" y="13" width="69" height="68" rx="10" fill="#05262f" />
    <text x="43.500" y="60" fontSize="44" fontWeight="500" textAnchor="middle" textLength="43" lengthAdjust="spacingAndGlyphs" fill="#e2f7fd">Ps</text></>],
  ["slack", true, <>
    <circle cx="43" cy="49" r="36" fill="#f8f8f8" />
    <g strokeWidth="9" strokeLinecap="round"><path d="M24.500 43h13" stroke="#3fc3ee" /><path d="M49 30.500v12" stroke="#3bb17e" /><path d="M49 54.500h13" stroke="#ecb22e" /><path d="M37 55v12" stroke="#e01e5a" /></g>
    <g><circle cx="37" cy="31" r="4.500" fill="#3fc3ee" /><circle cx="61" cy="43" r="4.500" fill="#3bb17e" /><circle cx="49" cy="67" r="4.500" fill="#ecb22e" /><circle cx="25" cy="55" r="4.500" fill="#e01e5a" /></g></>],
  ["preview", true, <>
    <rect x="14" y="17" width="60" height="52" fill="#f2efe8" /><rect x="17" y="20" width="55" height="46" fill="#8d6b3f" />
    <path d="M5 31l59-9 8 49-59 8z" fill="#fafafa" /><path d="M8 34l53-8 2 14-53 9z" fill="#a9cdf3" /><path d="M10 47l53-8 3 13-54 11z" fill="#2b5d9e" /><path d="M12 62q14-10 26-4t28-7l3 17-55 8z" fill="#7d8796" /><path d="M14 68q14-5 24 0t24 1l-48 7z" fill="#8a6a50" />
    <path d="M50 60h27l-2 18q-12 6-22 0z" fill="#6b5c4c" /><circle cx="63.500" cy="58" r="14.500" fill="#4b4b4d" /><circle cx="63.500" cy="58" r="11" fill="#a9b9c9" /></>],
];

const files = [
  ["shield", <>
    <rect x="12" y="24" width="62" height="46" fill="#6dbdf0" /><path d="M16 15h20l3 5h32v8H16z" fill="#d77b2c" />
    <path d="M43 16q22 2 36 8c0 30-10 52-36 65C18 76 8 54 8 24q14-6 35-8z" fill="#67b279" /><path d="M43 16q22 2 36 8c0 30-10 52-36 65z" fill="#5fae6b" />
    <path d="M29 47l13 17 21-29" stroke="#fff" strokeWidth="6" /></>],
  ["zip", <>
    <path d="M12 24v40h4V20z" fill="#222" /><rect x="14" y="17" width="58" height="68" rx="2" fill="#f5f5f5" /><rect x="35" y="19" width="16" height="64" fill="#2b2b2b" />
    <path d="M43 22v60" stroke="#fff" strokeWidth="7" strokeDasharray="3 3" /><path d="M14 61l26 24H16q-2 0-2-2z" fill="#38bdfb" /><path d="M72 61v22q0 2-2 2H38z" fill="#1da1f5" /></>],
  ["trash", <>
    <path d="M16 18l9-8 9 5 8-6 9 6 8-2 10 6-5 12H21z" fill="#d9dadb" /><path d="M22 22l10-8 5 8 8-9 8 10 8-5v10H24z" fill="#77706e" /><path d="M38 20l8-3 5 8-10 2z" fill="#eee" /><path d="M30 24l6-9 4 10zM52 26l4-8 6 7z" fill="#f4f4f4" />
    <path d="M14 20l8 56q1 9 21 9t21-9l8-56q-8 8-29 8t-29-8z" fill="#dcdcdc" opacity="0.920" /><ellipse cx="43" cy="20" rx="29" ry="7" stroke="#efefef" strokeWidth="2" /></>],
];

function DockIcon({ running, children }) {
  return (
    <Svg w={86} h={104}>
      {children}
      {running && <circle cx="43" cy="96" r="4" fill="#08254a" />}
    </Svg>
  );
}

function Dock() {
  const rule = "mt-[14px] h-[76px] w-[2px] shrink-0 bg-[#5c6f82]";
  return (
    <div className="absolute top-[1496px] left-[74px] flex h-[104px] w-[2412px] rounded-t-[10px] bg-[linear-gradient(90deg,#789ccc_0%,#7a9fc8_22%,#95a2b6_33%,#9aa3b4_42%,#8c9fb0_55%,#86a0b8_62%,#8fa0b2_75%,#869dba_88%,#9a9fae_100%)] pl-[5.500px] shadow-[0_-1px_0_rgba(140,150,165,0.5)]">
      <svg width="0" height="0" className="absolute">
        <defs>
          <linearGradient id="finder" x1="0" y1="0" x2="0" y2="1"><stop stopColor="#2bd1fd" /><stop offset="1" stopColor="#2372f0" /></linearGradient>
          <radialGradient id="glow"><stop stopColor="#fff" /><stop offset="0.400" stopColor="#fff" stopOpacity="0.700" /><stop offset="1" stopColor="#fff" stopOpacity="0" /></radialGradient>
          <linearGradient id="siriTop" x1="0" y1="0" x2="0" y2="1"><stop stopColor="#a02a78" /><stop offset="1" stopColor="#5b3c94" /></linearGradient>
          <linearGradient id="siriLow" x1="0" y1="0" x2="0" y2="1"><stop stopColor="#4fd8d8" /><stop offset="1" stopColor="#14405e" /></linearGradient>
          <linearGradient id="silver" x1="0" y1="0" x2="0" y2="1"><stop stopColor="#d5e3e8" /><stop offset="1" stopColor="#77777a" /></linearGradient>
          <radialGradient id="safari"><stop stopColor="#1fc3ee" /><stop offset="1" stopColor="#1f7ff5" /></radialGradient>
          <linearGradient id="green" x1="0" y1="0" x2="0" y2="1"><stop stopColor="#5cc795" /><stop offset="1" stopColor="#2aa866" /></linearGradient>
          <linearGradient id="blue" x1="0" y1="0" x2="0" y2="1"><stop stopColor="#55bdfc" /><stop offset="1" stopColor="#2585f7" /></linearGradient>
          <linearGradient id="store" x1="0" y1="0" x2="0" y2="1"><stop stopColor="#1dc5fc" /><stop offset="1" stopColor="#1d5be9" /></linearGradient>
          <linearGradient id="note" x1="0" y1="0" x2="0" y2="1"><stop stopColor="#fb5c74" /><stop offset="1" stopColor="#6f7ff5" /></linearGradient>
          <linearGradient id="petal" x1="1" y1="0" x2="0" y2="1"><stop stopColor="#fd5a6e" /><stop offset="1" stopColor="#fbc060" /></linearGradient>
        </defs>
      </svg>
      {apps.map(([n, r, art]) => <DockIcon key={n} running={r}>{art}</DockIcon>)}
      <div className={`${rule} mr-[18px] ml-[20px]`} />
      {moreApps.map(([n, r, art]) => <DockIcon key={n} running={r}>{art}</DockIcon>)}
      <div className={`${rule} mr-[17px] ml-[19px]`} />
      {files.map(([n, art]) => <DockIcon key={n}>{art}</DockIcon>)}
    </div>
  );
}

export default function App() {
  return (
    <div className="relative flex h-[1600px] w-[2560px] flex-col overflow-hidden bg-[linear-gradient(180deg,#060a18_0%,#04102c_10%,#0b2a63_22%,#155a96_34%,#2a82b4_41%,#a9bfc8_44.5%,#c0c3c4_48%,#9cacc0_53%,#8b9dbe_62%,#6d7ea2_76%,#566c88_90%,#55728a_95%,#8b8d98_97%,#8a8a96_100%)] font-['Inter','Noto_Sans_CJK_TC',sans-serif]">
      <MenuBar />
      <div className="mt-1 flex h-[1450px] w-[2550px] flex-col shadow-[0_0_12px_rgba(0,0,0,0.5)]">
        <Toolbar />
        <TabBar />
        <Kibana />
      </div>
      <div className="h-[102px] w-[200px] bg-linear-to-b from-[#4b6c8b] to-[#5f80ad]" />
      <div className="absolute top-[1400px] left-0 h-[96px] w-[2550px] bg-linear-to-b from-transparent to-black/[0.065] [mask-image:linear-gradient(90deg,transparent_1%,black_5%,black_95%,transparent_99%)]" />
      <Dock />
    </div>
  );
}
